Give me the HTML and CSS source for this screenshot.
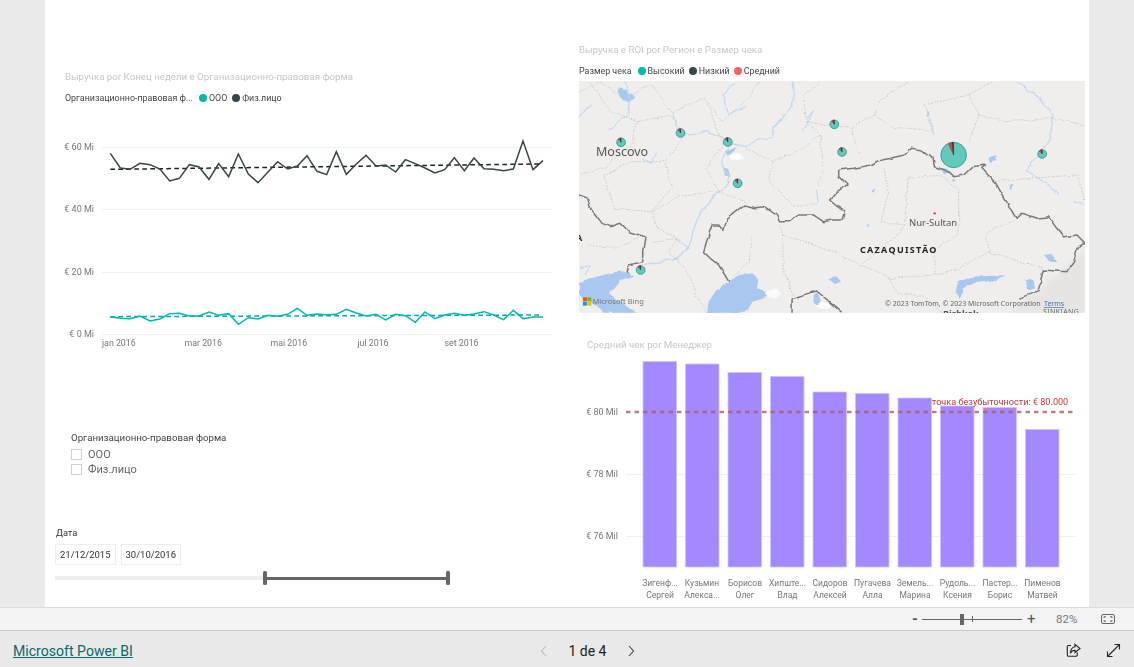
FILE: index.html
```html
<!DOCTYPE html>
<html lang="ru">
<head>
<meta charset="utf-8">
<title>Microsoft Power BI</title>
<link rel="stylesheet" href="styles.css">
</head>
<body>
<div class="viewport">
  <main class="canvas">
    <section class="col-left">
      <h2 class="vis-title line-title">Выручка por Конец недели e Организационно-правовая форма</h2>
      <div class="legend line-legend">
        <span class="legend-name">Организационно-правовая ф...</span>
        <span class="legend-item"><i class="dot teal"></i>ООО</span>
        <span class="legend-item"><i class="dot dark"></i>Физ.лицо</span>
      </div>
      <svg class="chart line-chart" viewBox="45 110 510 245" width="510" height="245">
        <g class="grid">
          <line x1="102" y1="147.5" x2="551" y2="147.5"/>
          <line x1="102" y1="209.5" x2="551" y2="209.5"/>
          <line x1="102" y1="272.5" x2="551" y2="272.5"/>
          <line x1="102" y1="334.5" x2="551" y2="334.5"/>
        </g>
        <g class="axis-y">
          <text x="94" y="149.500">€ 60 Mi</text>
          <text x="94" y="211.500">€ 40 Mi</text>
          <text x="94" y="274.500">€ 20 Mi</text>
          <text x="94" y="336.500">€ 0 Mi</text>
        </g>
        <g class="axis-x">
          <text x="102" y="346">jan 2016</text>
          <text x="184.500" y="346">mar 2016</text>
          <text x="270.500" y="346">mai 2016</text>
          <text x="357.500" y="346">jul 2016</text>
          <text x="444.500" y="346">set 2016</text>
        </g>
        <g transform="translate(40 60) scale(.33333)">
          <line class="trend trend-dark" x1="211" y1="328" x2="1500" y2="312"/>
          <line class="trend trend-teal" x1="211" y1="770" x2="1500" y2="765"/>
          <polyline class="series series-dark" points="211,280 241,324 270,328 300,310 330,314 360,327 389,363 418,355 448,314 477,321 507,358 536,311 566,350 595,282 625,342 654,368 684,336 713,305 743,327 772,318 801,287 831,334 860,344 889,275 919,343 949,312 978,286 1008,318 1037,315 1067,336 1096,299 1126,311 1155,324 1185,339 1214,329 1243,293 1273,332 1302,294 1332,326 1361,328 1391,332 1420,327 1449,243 1479,329 1509,302"/>
          <polyline class="series series-teal" points="211,771 241,775 270,776 300,768 330,783 360,777 389,761 418,760 448,768 477,768 507,756 536,766 566,761 595,793 625,773 654,777 684,766 713,769 743,763 772,745 801,766 831,762 860,764 889,763 919,748 949,759 978,768 1008,763 1037,780 1067,763 1096,767 1126,787 1155,756 1185,776 1214,765 1243,760 1273,766 1302,762 1332,755 1361,765 1391,779 1420,751 1449,776 1479,771 1509,771"/>
        </g>
      </svg>

      <div class="slicer">
        <div class="slicer-title">Организационно-правовая форма</div>
        <label class="check-row"><i class="check"></i>ООО</label>
        <label class="check-row"><i class="check"></i>Физ.лицо</label>
      </div>

      <div class="date-slicer">
        <div class="date-title">Дата</div>
        <div class="date-inputs">
          <span class="date-box">21/12/2015</span>
          <span class="date-box">30/10/2016</span>
        </div>
        <div class="range">
          <span class="range-off"></span>
          <span class="range-on"></span>
        </div>
      </div>
    </section>

    <section class="col-right">
      <h2 class="vis-title map-title">Выручка e ROI por Регион e Размер чека</h2>
      <div class="legend map-legend">
        <span class="legend-name">Размер чека</span>
        <span class="legend-item"><i class="dot teal"></i>Высокий</span>
        <span class="legend-item"><i class="dot dark"></i>Низкий</span>
        <span class="legend-item"><i class="dot red"></i>Средний</span>
      </div>
      <svg class="map" viewBox="579 81 506 232" width="506" height="232">
        <defs>
          <filter id="organic" x="-2%" y="-2%" width="104%" height="104%">
            <feTurbulence type="fractalNoise" baseFrequency=".03" numOctaves="2" seed="4"/>
            <feDisplacementMap in="SourceGraphic" scale="14" xChannelSelector="R" yChannelSelector="G"/>
          </filter>
          <g id="pie">
            <circle class="pie-body" r="13"/>
            <path class="pie-red" d="M0 0L-9 -9.500A13 13 0 0 1 -1.500 -12.900Z"/>
            <path class="pie-dark" d="M0 0L-2 -12.800A13 13 0 0 1 0 -13Z"/>
          </g>
        </defs>
        <rect x="579" y="81" width="506" height="232" class="land"/>
        <g transform="translate(570 35) scale(.338 .33333)">
          <path class="relief" d="M1300 833L1390 760L1440 720L1524 640V833Z"/>
          <g filter="url(#organic)">
            <g class="water">
              <path d="M27 745L60 730L100 720L130 712L170 708L190 722L150 735L130 760L115 775L140 795L170 812L195 833H100L60 800L35 790L27 780Z"/>
              <path d="M470 740L500 720L540 715L555 730L550 760L590 770L575 790L540 800L520 833H405L410 800L430 770L450 750Z"/>
              <path d="M722 778L733 772L742 800L730 812L720 800Z"/>
              <path d="M765 732L790 725L802 740L780 748Z"/>
              <path d="M1140 770L1150 740L1190 725L1250 722L1290 725L1260 735L1200 745L1165 760L1150 785Z"/>
              <path d="M1345 740L1368 733L1376 760L1360 766Z"/>
              <path d="M140 160L165 165L190 185L175 205L155 190Z"/>
              <path d="M1240 365L1260 357L1264 373L1246 382Z"/>
              <path d="M1095 398L1115 402L1128 413L1105 414Z"/>
              <path d="M1130 432L1142 435L1135 443Z"/>
              <path d="M892 468L902 460L898 476Z"/>
              <path d="M880 570L886 566L882 582Z"/>
              <path d="M1301 450L1308 447L1307 466L1301 465Z"/>
              <path d="M1402 660L1423 657L1442 678L1420 678Z"/>
              <path d="M1052 227L1063 233L1057 243Z"/>
              <path d="M458 345L498 337L480 352L466 362Z"/>
              <path d="M452 397L468 402L475 422L460 418Z"/>
            </g>
            <g class="river">
              <path d="M305 230L310 265L325 290L360 300L400 290L440 305L470 325L520 335L560 315L600 310"/>
              <path d="M600 280L640 240L665 190L660 140"/>
              <path d="M600 310L600 280L625 250"/>
              <path d="M470 335L450 370L450 395L470 420L465 450L430 480L395 520L370 570L350 640L320 670L270 680L210 690"/>
              <path d="M160 140L180 200L170 240L130 275L110 285"/>
              <path d="M1320 140L1380 180L1430 240L1420 310L1395 350L1350 405L1400 440L1450 480"/>
              <path d="M490 145L450 180L470 240L520 215"/>
              <path d="M700 250L720 230L690 290"/>
              <path d="M260 350L240 385L215 372"/>
              <path d="M27 245L60 210"/>
              <path d="M735 510L730 470"/>
              <path d="M1080 300L1060 250"/>
              <path d="M30 700L60 690L45 720"/>
              <path d="M320 610L350 640L300 680"/>
              <path d="M1490 500L1524 510"/>
            </g>
            <g class="region">
              <path d="M27 170L90 140L160 190L240 150L300 230L400 190L450 260L520 200L560 140"/>
              <path d="M60 140L120 230L200 260L180 330L100 400L30 420"/>
              <path d="M200 260L300 240L340 300L280 380L180 380L100 420L130 520L240 530L330 480L440 470"/>
              <path d="M280 380L300 460L240 530L260 580L320 610"/>
              <path d="M400 190L430 270L450 330L400 400L440 470L520 500"/>
              <path d="M520 340L600 380L590 440L660 510L730 510"/>
              <path d="M600 380L690 340L740 300L700 260L690 180L740 140"/>
              <path d="M740 300L750 400L730 470"/>
              <path d="M700 260L830 280L900 240L920 190L1000 140"/>
              <path d="M830 280L860 370"/>
              <path d="M900 240L960 280L1080 290L1050 210L1180 180L1250 140"/>
              <path d="M1180 180L1210 240L1290 260L1430 250L1524 270"/>
              <path d="M1180 320L1210 240"/>
              <path d="M1250 440L1360 430L1500 420L1524 500"/>
              <path d="M930 400L940 480L920 560L990 570L1000 430L1100 420L1150 470L1150 600"/>
              <path d="M990 570L960 610L860 690L780 650L630 600L620 570"/>
              <path d="M630 600L630 700L660 780"/>
              <path d="M860 690L950 730L1080 720L1150 700L1240 650L1230 590L1310 560"/>
              <path d="M1240 650L1400 700"/>
              <path d="M1080 720L1080 640L1150 600"/>
              <path d="M240 620L320 610L290 650L340 700L400 830"/>
              <path d="M50 630L130 640L215 605"/>
              <path d="M950 730L970 780L1040 780L1100 833"/>
              <path d="M470 740L530 680L540 610"/>
            </g>
            <g class="patch">
              <ellipse cx="492" cy="365" rx="18" ry="11"/>
              <ellipse cx="600" cy="775" rx="20" ry="12"/>
              <ellipse cx="750" cy="812" rx="22" ry="9"/>
            </g>
            <g class="border">
              <path d="M470 740L440 690L415 670L395 650L410 600L420 570L440 570L455 590L465 550L490 530L515 510L545 518L575 515L610 540L620 560L650 560L675 540L720 540L750 560L775 555L805 555L812 530L785 510L768 495L790 470L820 450L795 425L795 405L840 400L890 390L910 378L990 360L1010 340L1045 345L1070 365L1075 395L1110 405L1135 425L1165 420L1190 395L1230 390L1218 400L1260 445L1320 550L1335 535L1380 550L1415 545L1440 580L1460 605L1500 600L1524 625"/>
              <path d="M1524 625L1500 640L1490 680L1470 710L1400 705L1385 770L1330 790"/>
              <path d="M27 480L55 490L65 525L95 565L120 575L150 565L175 590L222 605L215 650L215 680L175 690L168 710"/>
              <path d="M657 833L657 790L730 768L805 833"/>
            </g>
          </g>
          <circle class="city" cx="1079" cy="535" r="3.500"/>
          <use href="#pie" x="151" y="322"/>
          <use href="#pie" x="327" y="294"/>
          <use href="#pie" x="467" y="321"/>
          <use href="#pie" x="496" y="445"/>
          <use href="#pie" x="782" y="268"/>
          <use href="#pie" x="805" y="351"/>
          <use href="#pie" x="1397" y="357"/>
          <use href="#pie" x="209" y="705"/>
          <g transform="translate(1135 360)">
            <circle class="pie-body" r="38"/>
            <path class="pie-red" d="M0 0L-16 -34.500A38 38 0 0 1 -4.600 -37.700Z"/>
            <path class="pie-dark" d="M0 0L-4.600 -37.700A38 38 0 0 1 0 -38Z"/>
          </g>
          <rect class="ms-r" x="38" y="787" width="12" height="12"/>
          <rect class="ms-g" x="51" y="787" width="12" height="12"/>
          <rect class="ms-b" x="38" y="800" width="12" height="12"/>
          <rect class="ms-y" x="51" y="800" width="12" height="12"/>
        </g>
        <text class="lbl-city" x="596" y="156">Moscovo</text>
        <text class="lbl-mid" x="909" y="226">Nur-Sultan</text>
        <text class="lbl-country" x="860" y="253">CAZAQUISTÃO</text>
        <text class="lbl-edge" x="576" y="241">A</text>
        <text class="lbl-bing" x="592.500" y="304">Microsoft Bing</text>
        <text class="lbl-copy" x="885" y="306">© 2023 TomTom, © 2023 Microsoft Corporation</text>
        <text class="lbl-terms" x="1044" y="306">Terms</text>
        <text class="lbl-sink" x="1043" y="314">SINKIANG</text>
        <text class="lbl-clip" x="943" y="317">Bishkek</text>
      </svg>

      <h2 class="vis-title bar-title">Средний чек por Менеджер</h2>
      <svg class="chart bar-chart" viewBox="579 352 506 255" width="506" height="255">
        <g class="grid">
          <line x1="626" y1="474.500" x2="1076" y2="474.500"/>
          <line x1="626" y1="536.500" x2="1076" y2="536.500"/>
        </g>
        <g class="axis-y">
          <text x="618" y="415">€ 80 Mil</text>
          <text x="618" y="477">€ 78 Mil</text>
          <text x="618" y="539">€ 76 Mil</text>
        </g>
        <g class="bars">
          <rect x="643" y="361.500" width="33.500" height="205.500"/>
          <rect x="685.500" y="364" width="33.500" height="203"/>
          <rect x="728" y="372.500" width="33.500" height="194.500"/>
          <rect x="770.500" y="376.500" width="33.500" height="190.500"/>
          <rect x="813" y="392" width="33.500" height="175"/>
          <rect x="855.500" y="393.500" width="33.500" height="173.500"/>
          <rect x="898" y="398" width="33.500" height="169"/>
          <rect x="940.500" y="406" width="33.500" height="161"/>
          <rect x="983" y="407.500" width="33.500" height="159.500"/>
          <rect x="1025.500" y="429.500" width="33.500" height="137.500"/>
        </g>
        <line class="breakeven" x1="626" y1="412" x2="1076" y2="412"/>
        <text class="breakeven-label" x="932" y="405">точка безубыточности: € 80.000</text>
        <g class="axis-cat">
          <text x="660" y="586">Зигенф...</text><text x="660" y="598">Сергей</text>
          <text x="702" y="586">Кузьмин</text><text x="702" y="598">Алекса...</text>
          <text x="745" y="586">Борисов</text><text x="745" y="598">Олег</text>
          <text x="787.500" y="586">Хипште...</text><text x="787.500" y="598">Влад</text>
          <text x="830" y="586">Сидоров</text><text x="830" y="598">Алексей</text>
          <text x="872.500" y="586">Пугачева</text><text x="872.500" y="598">Алла</text>
          <text x="915" y="586">Земель...</text><text x="915" y="598">Марина</text>
          <text x="957.500" y="586">Рудоль...</text><text x="957.500" y="598">Ксения</text>
          <text x="1000" y="586">Пастер...</text><text x="1000" y="598">Борис</text>
          <text x="1042.500" y="586">Пименов</text><text x="1042.500" y="598">Матвей</text>
        </g>
      </svg>
    </section>
  </main>
</div>

<div class="zoombar">
  <span class="zoom-minus">-</span>
  <span class="zoom-track"><i class="zoom-tick"></i><i class="zoom-thumb"></i></span>
  <span class="zoom-plus">+</span>
  <span class="zoom-pct">82%</span>
  <svg class="fit-icon" width="16" height="12" viewBox="0 0 16 12">
    <rect x="1.500" y="1.500" width="13" height="9" rx="1.500"/>
    <path d="M4 5V3.800H6M10 3.800H12V5M12 7V8.200H10M6 8.200H4V7"/>
  </svg>
</div>

<footer class="footer">
  <a class="brand" href="#">Microsoft Power BI</a>
  <nav class="pager">
    <svg class="chev chev-off" width="10" height="12" viewBox="0 0 10 12"><path d="M7 1L2.500 6L7 11"/></svg>
    <span class="page-num">1 de 4</span>
    <svg class="chev" width="10" height="12" viewBox="0 0 10 12"><path d="M3 1L7.500 6L3 11"/></svg>
  </nav>
  <div class="foot-icons">
    <svg class="ficon" width="15" height="15" viewBox="0 0 15 15">
      <path d="M5 2.500H2.500A1.200 1.200 0 0 0 1.300 3.700V12A1.200 1.200 0 0 0 2.500 13.200H10A1.200 1.200 0 0 0 11.200 12V9.500"/>
      <path d="M9 1.300L14 5.500L9 9.500V7.300C6.800 7.300 5.300 8.200 4.300 10.200C4.500 7 6 4.200 9 3.700Z"/>
    </svg>
    <svg class="ficon" width="15" height="15" viewBox="0 0 15 15">
      <path d="M1.500 13.500L13.500 1.500M8.500 1.500H13.500V6.500M1.500 8.500V13.500H6.500"/>
    </svg>
  </div>
</footer>
</body>
</html>
```
FILE: styles.css
```css
* { box-sizing: border-box; }
html, body { margin: 0; height: 100%; }
body {
  display: flex;
  flex-direction: column;
  height: 667px;
  overflow: hidden;
  background: #eaeaea;
  font-family: Roboto, "Noto Sans", sans-serif;
  color: #444;
}

.viewport { height: 607px; padding: 0 45px; flex: none; }
.canvas {
  width: 1044px;
  height: 607px;
  background: #fff;
  display: grid;
  grid-template-columns: 534px 510px;
  overflow: hidden;
  filter: blur(.3px);
}

.vis-title {
  margin: 0;
  font-weight: 400;
  font-size: 9.730px;
  line-height: 14px;
  color: #c8c6c6;
  white-space: nowrap;
}

.legend {
  display: flex;
  align-items: center;
  font-size: 8.900px;
  line-height: 14px;
  color: #444;
  white-space: nowrap;
}
.legend-item { display: inline-flex; align-items: center; }
.dot { display: inline-block; width: 8px; height: 8px; border-radius: 50%; margin-right: 2px; }
.teal { background: #01b8aa; }
.dark { background: #374649; }
.red { background: #fd625e; }

.line-title { margin: 70px 0 0 20px; }
.line-legend { margin: 7px 0 0 20px; gap: 5px; }
.line-legend .legend-name { margin-right: 1px; }
.line-chart { display: block; margin-top: 5px; }

.chart text { font-size: 9px; }
.grid line { stroke: #f0f0f0; stroke-width: 1; }
.axis-y text { text-anchor: end; fill: #777; }
.chart .axis-x text { fill: #777; font-size: 8.800px; }
.series { fill: none; stroke-width: 4.500; stroke-linejoin: miter; }
.series-dark { stroke: #374649; }
.series-teal { stroke: #01b8aa; }
.trend { stroke-width: 4.500; stroke-dasharray: 14 10; }
.trend-dark { stroke: #222; }
.trend-teal { stroke: #01a99c; }

.slicer { margin: 76px 0 0 26px; font-size: 9.700px; }
.slicer-title { line-height: 14px; color: #444; }
.check-row { display: flex; align-items: center; gap: 6px; height: 15px; color: #666; font-size: 11px; }
.check-row:first-of-type { margin-top: 2px; }
.check { display: block; width: 11px; height: 11px; border: 1px solid #d0d0d0; }

.date-slicer { margin: 49px 0 0 10px; }
.date-title { font-size: 9.200px; line-height: 14px; color: #333; padding-left: 1px; }
.date-inputs { display: flex; gap: 5px; margin-top: 4px; }
.date-box {
  width: 60.500px; height: 21px;
  border: 1px solid #eee;
  font-size: 9.500px;
  line-height: 19px;
  text-align: center;
  color: #333;
}
.range { display: flex; align-items: center; margin-top: 11px; height: 4px; }
.range-off { width: 210px; height: 4px; background: #eeeeee; }
.range-on { position: relative; width: 183px; height: 3px; background: #666; }
.range-on::before, .range-on::after {
  content: "";
  position: absolute;
  top: -6px;
  width: 4px;
  height: 14px;
  background: #666;
  border-radius: 1.500px;
}
.range-on::before { left: -2px; }
.range-on::after { right: -2px; }

.col-right { min-width: 0; }
.map-title { margin-top: 43px; }
.map-legend { margin-top: 7px; gap: 4px; }
.map-legend .legend-name { margin-right: 2px; }
.map { display: block; margin-top: 3px; }
.land { fill: #efeeec; }
.relief { fill: #e6e5e3; filter: blur(6px); }
.water path { fill: #a9c7ef; }
.river path { fill: none; stroke: #c3d6f2; stroke-width: 3.500; }
.region path { fill: none; stroke: #c6c4c0; stroke-width: 2.500; stroke-dasharray: 5 4; }
.patch ellipse { fill: #fbfbfb; }
.border path { fill: none; stroke: #7a7a7a; stroke-width: 4.500; stroke-linejoin: round; }
.city { fill: #e0344a; }
.pie-body { fill: #5fcabd; stroke: #17897c; stroke-width: 2; }
.pie-red { fill: #e2423f; stroke: #7e2726; stroke-width: 1; }
.pie-dark { fill: #333; stroke: #222; stroke-width: 1; }
.ms-r { fill: #f25022; }
.ms-g { fill: #7fba00; }
.ms-b { fill: #00a4ef; }
.ms-y { fill: #ffb900; }
.map text { font-family: "Noto Sans", sans-serif; }
.lbl-city { font-size: 12.500px; fill: #555; }
.lbl-mid { font-size: 9.500px; fill: #555; }
.lbl-country { font-size: 9px; font-weight: 700; letter-spacing: 1.300px; fill: #222; }
.lbl-edge { font-size: 9px; font-weight: 700; fill: #222; }
.lbl-bing { font-size: 7.500px; fill: #777; }
.lbl-copy { font-size: 7px; fill: #666; }
.lbl-terms { font-size: 7px; fill: #4a6fb5; text-decoration: underline; }
.lbl-sink { font-size: 7px; letter-spacing: .4px; fill: #666; }
.lbl-clip { font-size: 9px; font-weight: 700; fill: #555; }

.bar-title { margin: 25px 0 0 8px; }
.bar-chart { display: block; }
.bars rect { fill: #a388ff; stroke: #cfc4ff; stroke-width: .8; }
.breakeven { stroke: #a8606a; stroke-opacity: .8; stroke-width: 2.300; stroke-dasharray: 4.500 4; }
.chart .breakeven-label { fill: #c9353a; font-size: 9.100px; }
.chart .axis-cat text { text-anchor: middle; fill: #777; font-size: 8.500px; }

.zoombar {
  flex: none;
  height: 24px;
  background: #f3f3f3;
  border-top: 1px solid #dcdcdc;
  border-bottom: 1px solid #c8c8c8;
  display: flex;
  align-items: center;
  padding-left: 912px;
  color: #555;
}
.zoom-minus { width: 10px; font-size: 15px; font-weight: 700; line-height: 20px; }
.zoom-track { position: relative; display: block; width: 100px; height: 1px; background: #666; }
.zoom-thumb { position: absolute; left: 38px; top: -5px; width: 4px; height: 11px; background: #666; }
.zoom-tick { position: absolute; left: 50px; top: -3px; width: 1px; height: 6px; background: #666; }
.zoom-plus { margin-left: 5px; width: 14px; font-size: 15px; line-height: 20px; }
.zoom-pct { margin-left: 15px; font-size: 11.500px; color: #777; }
.fit-icon { margin-left: 23px; }
.fit-icon rect { fill: none; stroke: #666; }
.fit-icon path { fill: none; stroke: #666; }

.footer {
  flex: 1;
  display: grid;
  grid-template-columns: 526px 110px 1fr;
  align-items: center;
  padding: 3px 0 0 13px;
  background: #e9e9e9;
}
.brand { font-size: 14.100px; color: #0b6a70; text-decoration: underline; }
.pager { display: flex; align-items: center; justify-content: space-between; width: 97px; }
.page-num { font-size: 14px; color: #222; }
.chev path { fill: none; stroke: #444; stroke-width: 1.100; }
.chev-off path { stroke: #bbb; }
.foot-icons { display: flex; gap: 25px; justify-content: flex-end; padding-right: 13px; }
.ficon path { fill: none; stroke: #222; stroke-width: 1.100; }
```
